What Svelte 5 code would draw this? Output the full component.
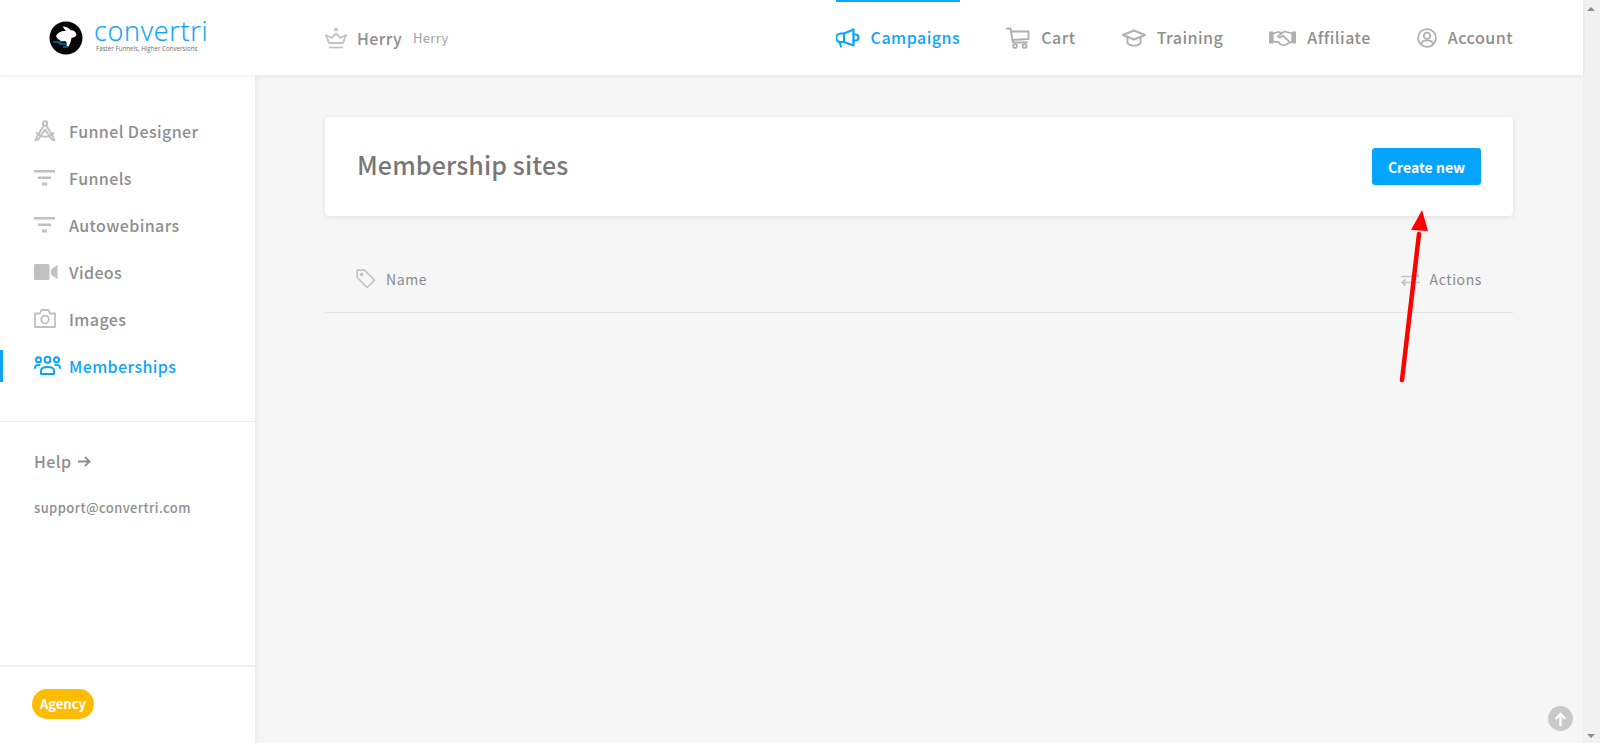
<script>
  const nav = [
    { label: 'Campaigns', icon: 'megaphone', active: true },
    { label: 'Cart', icon: 'cart' },
    { label: 'Training', icon: 'cap' },
    { label: 'Affiliate', icon: 'hands' },
    { label: 'Account', icon: 'user' }
  ];
  const side = [
    { label: 'Funnel Designer', icon: 'compass' },
    { label: 'Funnels', icon: 'filter' },
    { label: 'Autowebinars', icon: 'filter' },
    { label: 'Videos', icon: 'video' },
    { label: 'Images', icon: 'camera' },
    { label: 'Memberships', icon: 'users', active: true }
  ];
</script>

{#snippet icon(name)}
  {#if name === 'megaphone'}
    <svg width="24" height="20" viewBox="0 0 24 20" fill="none" stroke="currentColor" stroke-width="2.2" stroke-linejoin="round" stroke-linecap="round"><path d="M8 5.5 17.5 1.5V17.500L8 14Z"/><path d="M8 5.5H4.500a3.700 3.700 0 0 0 0 8.500H8"/><path d="M3.500 14 5 18.500"/><path d="M17.500 6.500h2a2.800 2.800 0 0 1 0 6h-2"/></svg>
  {:else if name === 'cart'}
    <svg width="24" height="22" viewBox="0 0 24 22" fill="none" stroke="currentColor" stroke-width="1.900" stroke-linejoin="round" stroke-linecap="round"><path d="M1 1.500h3.500L7 15.500h14"/><path d="M5 4.500h17.500V12L6.500 13"/><circle cx="9" cy="19" r="1.900"/><circle cx="18.500" cy="19" r="1.900"/></svg>
  {:else if name === 'cap'}
    <svg width="24" height="20" viewBox="0 0 24 20" fill="none" stroke="currentColor" stroke-width="1.900" stroke-linejoin="round" stroke-linecap="round"><path d="M1 7 12 2.500 23 7 12 11.500Z"/><path d="M5.500 9.500V15c2 3.500 11 3.500 13 0V9.500"/></svg>
  {:else if name === 'hands'}
    <svg width="27" height="16" viewBox="0 0 27 16" fill="none" stroke="currentColor" stroke-width="1.800" stroke-linejoin="round" stroke-linecap="round"><path d="M0 2.500h3.500V12.500H0M27 2.500h-3.500V12.500H27" fill="currentColor"/><path d="M3.500 3.500 9 2l4 .8 3-1.300 7.500 2v8l-5.500 2.500-3 1.500-3-1-3-2.500-5.500-.5Z"/><path d="M13 2.800 9 6.500c1.500 1.500 3 1 5-.8l6.500 6.300"/></svg>
  {:else if name === 'user'}
    <svg width="20" height="20" viewBox="0 0 22 22" fill="none" stroke="currentColor" stroke-width="1.900" stroke-linecap="round"><circle cx="11" cy="11" r="9.800"/><circle cx="11" cy="8.500" r="3.500"/><path d="M4.500 17.500c.5-3 3-4 6.500-4s6 1 6.500 4"/></svg>
  {:else if name === 'compass'}
    <svg width="22" height="22" viewBox="0 0 22 22" fill="none" stroke="currentColor" stroke-width="1.900" stroke-linejoin="round" stroke-linecap="round"><circle cx="11" cy="3.500" r="2.200"/><path d="M9.800 5.500 3 16.500l-1.300 3.800 2.800-1 6.200-9.500M12.200 5.500 19 16.500l1.300 3.800-2.800-1-6.200-9.500"/><path d="M2.500 13c2.500 2.800 4.500 3.800 8.500 3.800s6-1 8.500-3.800"/></svg>
  {:else if name === 'filter'}
    <svg width="22" height="16" viewBox="0 0 22 16" fill="currentColor"><rect x="0" y="0" width="21" height="2.500"/><rect x="4" y="6.500" width="13" height="2.500"/><rect x="8" y="12.500" width="5" height="3"/></svg>
  {:else if name === 'video'}
    <svg width="24" height="16" viewBox="0 0 24 16" fill="currentColor"><rect x="0" y="0" width="15.500" height="16" rx="1.500"/><path d="M17 5.500 23.500.8V15.200L17 10.500Z"/></svg>
  {:else if name === 'camera'}
    <svg width="22" height="19" viewBox="0 0 22 19" fill="none" stroke="currentColor" stroke-width="1.800" stroke-linejoin="round"><path d="M1 4.500h5L7.500 1h7L16 4.500h5V18H1Z"/><circle cx="11" cy="10.500" r="3.800"/></svg>
  {:else if name === 'users'}
    <svg width="27" height="19" viewBox="0 0 27 19" fill="none" stroke="currentColor" stroke-width="2" stroke-linecap="round" stroke-linejoin="round"><circle cx="4.500" cy="3.800" r="2.500"/><circle cx="13.500" cy="3.800" r="3"/><circle cx="22.500" cy="3.800" r="2.500"/><path d="M1 12c0-2.500 1.500-3.500 4.500-3M26 12c0-2.500-1.500-3.500-4.500-3"/><path d="M7 18v-3.500c0-3 2.500-3.500 6.500-3.500s6.500.5 6.500 3.500V18Z"/></svg>
  {/if}
{/snippet}

<div class="page">
  <div class="column">
    <header class="top">
      <div class="brand">
        <svg class="mark" width="34" height="34" viewBox="0 0 34 34"><circle cx="17" cy="17" r="16.500" fill="#050505"/><path d="M7 15C9 11 13 9.500 17 10L13.500 5.500C17 5.500 20 7 22 9.500 23.500 9 25.500 10 26.500 11.500 28 13.500 27.500 15.500 25.500 16L22.500 17C22 20 21 23 19.500 25.500L17.500 25C18 22.500 17.500 21 16.500 20 12.500 21 8.500 19 7 15Z" fill="#fff"/><path d="M4 21h9M10 23h8M14 26h5" stroke="#0a9cf0" stroke-width="1.200"/></svg>
        <div class="wordmark">
          <span class="word">convertri</span>
          <span class="tag">Faster Funnels, Higher Conversions</span>
        </div>
      </div>
      <div class="acct">
        <svg class="crown" width="22" height="22" viewBox="0 0 22 22" fill="none" stroke="#c4c4c4" stroke-width="1.800" stroke-linejoin="round"><circle cx="11" cy="2.500" r="2" fill="#c4c4c4" stroke="none"/><path d="M1 8 6.500 11 11 6.500 15.500 11 21 8 18 16H4Z"/><path d="M4 20.500h14"/></svg>
        <span class="acct-name">Herry</span>
        <span class="acct-sub">Herry</span>
      </div>
      <nav class="nav">
        {#each nav as n}
          <a class="nav-item" class:active={n.active} href="#top">
            <span class="nav-icon">{@render icon(n.icon)}</span>{n.label}
          </a>
        {/each}
      </nav>
    </header>

    <div class="body">
      <aside class="side">
        <ul class="side-list">
          {#each side as s}
            <li class="side-item" class:active={s.active}>
              <span class="side-icon">{@render icon(s.icon)}</span>{s.label}
            </li>
          {/each}
        </ul>
        <div class="help">
          <div class="help-link">Help
            <svg width="13" height="11" viewBox="0 0 13 11" fill="none" stroke="currentColor" stroke-width="1.800"><path d="M0 5.500h11.500M7 1l4.500 4.500L7 10"/></svg>
          </div>
          <div class="support">support@convertri.com</div>
        </div>
        <div class="plan"><span class="badge">Agency</span></div>
      </aside>

      <main class="main">
        <section class="card">
          <h1>Membership sites</h1>
          <button class="create">Create new</button>
        </section>
        <div class="thead">
          <span class="th">
            <svg width="20" height="20" viewBox="0 0 20 20" fill="none" stroke="#c4c4c4" stroke-width="1.700" stroke-linejoin="round"><path d="M1.200 1.200h7.300l10 10-7.300 7.300-10-10Z"/><circle cx="5.500" cy="5.500" r="1" fill="#c4c4c4"/></svg>
            Name
          </span>
          <span class="th">
            <svg width="19" height="13" viewBox="0 0 19 13" fill="none" stroke="#c4c4c4" stroke-width="1.700"><path d="M0 3.500h18M14.500 .5l3.500 3M19 9.500H1M4.500 6.500 1 9.500l3.500 3"/></svg>
            Actions
          </span>
        </div>
      </main>
    </div>
  </div>

  <div class="scrollbar"><span class="tri up"></span><span class="tri down"></span></div>

  <button class="to-top" aria-label="Back to top">
    <svg width="13" height="14" viewBox="0 0 13 14" fill="none" stroke="#fff" stroke-width="2.400"><path d="M6.500 14V2M1.500 7l5-5 5 5"/></svg>
  </button>

  <svg class="arrow" width="34" height="176" viewBox="0 0 34 176">
    <path d="M4 172 21 26" stroke="#fe0000" stroke-width="4.500" stroke-linecap="round" fill="none"/>
    <path d="M24 2 30 23 13 22Z" fill="#fe0000"/>
  </svg>
</div>

<style>
  :global(body) {
    margin: 0;
    background: #f6f6f6;
    font-family: "Noto Sans CJK SC", "Open Sans", sans-serif;
    overflow: hidden;
  }
  .page {
    position: relative;
    display: flex;
    height: 743px;
    overflow: hidden;
  }
  .column {
    flex: 1;
    min-width: 0;
    display: flex;
    flex-direction: column;
  }
  .top {
    position: relative;
    z-index: 2;
    flex: 0 0 75px;
    display: flex;
    align-items: center;
    background: #fff;
    box-shadow: 0 1px 4px rgba(0, 0, 0, 0.07);
  }
  .brand {
    display: flex;
    align-items: center;
    gap: 11px;
    width: 325px;
    padding-left: 49px;
    box-sizing: border-box;
  }
  .mark { flex: none; }
  .wordmark {
    display: flex;
    flex-direction: column;
    margin-top: -6px;
  }
  .word {
    font-family: "Open Sans", sans-serif;
    font-weight: 300;
    font-size: 27px;
    line-height: 28px;
    letter-spacing: 0.7px;
    color: #0da5fc;
    -webkit-text-stroke: 0.2px #0da5fc;
  }
  .tag {
    font-family: "Open Sans", sans-serif;
    font-size: 6.200px;
    line-height: 8px;
    margin-left: 2px;
    color: #6f6f6f;
    white-space: nowrap;
  }
  .acct {
    display: flex;
    align-items: center;
    color: #8e8e8e;
  }
  .crown { margin-right: 10px; }
  .acct-name {
    font-size: 16px;
    font-weight: 500;
    letter-spacing: 0.4px;
    margin-right: 11px;
  }
  .acct-sub {
    font-size: 13px;
    letter-spacing: 0.3px;
    color: #a0a0a0;
  }
  .nav {
    display: flex;
    align-items: stretch;
    align-self: stretch;
    gap: 46px;
    margin-left: auto;
    padding-right: 70px;
  }
  .nav-item {
    position: relative;
    display: flex;
    align-items: center;
    padding-bottom: 2px;
    color: #8e8e8e;
    text-decoration: none;
    font-size: 16px;
    font-weight: 500;
    letter-spacing: 0.5px;
  }
  .nav-icon {
    display: flex;
    color: #b0b0b0;
    margin: 2px 11px 0 0;
  }
  .nav-item.active { color: #0da5fc; }
  .nav-item.active .nav-icon { color: #0da5fc; }
  .nav-item.active::before {
    content: "";
    position: absolute;
    top: 0;
    left: 0;
    right: 0;
    height: 2px;
    background: #0da5fc;
  }
  .body {
    flex: 1;
    display: flex;
    min-height: 0;
  }
  .side {
    flex: 0 0 255px;
    display: flex;
    flex-direction: column;
    background: #fff;
    box-shadow: 2px 0 6px rgba(0, 0, 0, 0.06);
    z-index: 1;
  }
  .side-list {
    list-style: none;
    margin: 0;
    padding: 32px 0 32px;
    border-bottom: 1px solid #e9e9e9;
  }
  .side-item {
    position: relative;
    display: flex;
    align-items: center;
    height: 47px;
    color: #8e8e8e;
    font-size: 16px;
    font-weight: 500;
    letter-spacing: 0.4px;
  }
  .side-icon {
    flex: 0 0 35px;
    margin-left: 34px;
    display: flex;
    color: #c0c0c0;
  }
  .side-item.active,
  .side-item.active .side-icon { color: #0da5fc; }
  .side-item.active::before {
    content: "";
    position: absolute;
    left: 0;
    top: 8px;
    bottom: 7px;
    width: 3px;
    background: #0da5fc;
  }
  .help {
    flex: 1;
    padding: 27px 34px 0;
    border-bottom: 2px solid #f1f1f1;
  }
  .help-link {
    display: flex;
    align-items: center;
    gap: 7px;
    font-size: 16px;
    font-weight: 500;
    letter-spacing: 0.4px;
    color: #8e8e8e;
  }
  .support {
    margin-top: 25px;
    font-size: 13px;
    font-weight: 500;
    letter-spacing: 0.4px;
    color: #8e8e8e;
  }
  .plan {
    flex: 0 0 76px;
    box-sizing: border-box;
    padding: 22px 32px 0;
  }
  .badge {
    display: block;
    width: 62px;
    height: 30px;
    line-height: 29px;
    text-align: center;
    border-radius: 15px;
    background: #ffbc05;
    color: #fff;
    font-size: 13px;
    font-weight: 700;
  }
  .main {
    flex: 1;
    padding: 42px 70px 0;
    min-width: 0;
  }
  .card {
    display: flex;
    align-items: center;
    justify-content: space-between;
    height: 99px;
    padding: 0 32px;
    background: #fff;
    border-radius: 4px;
    box-shadow: 0 1px 5px rgba(0, 0, 0, 0.1);
  }
  h1 {
    margin: 0 0 6px;
    font-size: 25px;
    font-weight: 500;
    letter-spacing: 0.12px;
    color: #777;
  }
  .create {
    width: 109px;
    height: 37px;
    border: 0;
    border-radius: 3px;
    background: #05a4ff;
    color: #fff;
    font: 700 14px "Noto Sans CJK SC", sans-serif;
    padding: 0;
  }
  .thead {
    display: flex;
    align-items: center;
    justify-content: space-between;
    box-sizing: border-box;
    height: 97px;
    padding: 30px 31px 0;
    border-bottom: 1px solid #e3e3e3;
  }
  .th {
    display: flex;
    align-items: center;
    gap: 10px;
    font-size: 14px;
    letter-spacing: 0.6px;
    color: #8a8a8a;
  }
  .scrollbar {
    flex: 0 0 17px;
    position: relative;
    background: #f1f1f1;
  }
  .tri {
    position: absolute;
    left: 4px;
    width: 0;
    height: 0;
    border-left: 4px solid transparent;
    border-right: 4px solid transparent;
  }
  .tri.up { top: 7px; border-bottom: 4px solid #8c8c8c; }
  .tri.down { bottom: 5px; border-top: 4px solid #8c8c8c; }
  .to-top {
    position: absolute;
    left: 1548px;
    top: 706px;
    width: 25px;
    height: 25px;
    padding: 0;
    border: 0;
    border-radius: 50%;
    background: #c9c9c9;
    display: flex;
    align-items: center;
    justify-content: center;
  }
  .arrow {
    position: absolute;
    left: 1398px;
    top: 208px;
    z-index: 3;
  }
</style>
